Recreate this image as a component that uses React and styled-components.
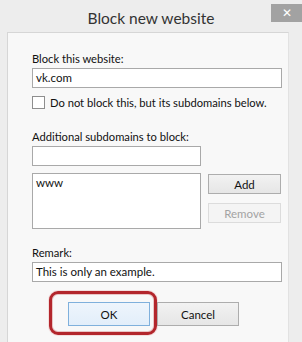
import React from 'react';
import styled, { createGlobalStyle } from 'styled-components';

const Global = createGlobalStyle`
  html, body { margin: 0; padding: 0; background: #ededed; }
  body { font-family: Lato, "Liberation Sans", sans-serif; }
`;

const Window = styled.div`
  width: 302px;
  height: 342px;
  background: #ededed;
  overflow: hidden;
  display: flex;
  flex-direction: column;
`;

const TitleBar = styled.div`
  height: 32px;
  display: grid;
  grid-template-columns: 31px 1fr 31px;
  align-items: start;
`;

const Title = styled.div`
  grid-column: 2;
  text-align: center;
  font-size: 15.5px;
  line-height: 22px;
  padding-top: 7px;
  color: #333;
`;

const CloseButton = styled.div`
  margin-top: 4px;
  height: 18px;
  background: #a2a2a2;
  color: #fff;
  font-size: 12px;
  line-height: 18px;
  text-align: center;
`;

const Panel = styled.div`
  margin-left: 7px;
  width: 282px;
  flex: 1;
  background: #f8f8f8;
  border-left: 1px solid #d6d6d6;
  border-top: 1px solid #d6d6d6;
  border-right: 1px solid #e2e2e2;
  padding: 18px 0 0 24px;
  box-sizing: border-box;
  display: flex;
  flex-direction: column;
`;

const Label = styled.div`
  font-size: 11.2px;
  line-height: 16px;
  color: #111;
  white-space: nowrap;
  margin-top: ${(p) => p.$top || 0}px;
`;

const TextBox = styled.div`
  width: ${(p) => p.$width}px;
  height: ${(p) => p.$height || 20}px;
  box-sizing: border-box;
  border: 1px solid #a9a9a9;
  background: #fff;
  font-size: 11.5px;
  line-height: 18px;
  padding: 0 3px;
  color: #111;
  margin-top: ${(p) => p.$top || 0}px;
`;

const CheckRow = styled.div`
  display: flex;
  align-items: center;
  gap: 5px;
  margin-top: 8px;
  font-size: 11.2px;
  color: #111;
  white-space: nowrap;
`;

const CheckBox = styled.div`
  width: 13px;
  height: 13px;
  box-sizing: border-box;
  border: 1px solid #8e8e8e;
  background: #fff;
`;

const ListRow = styled.div`
  display: flex;
  gap: 7px;
  margin-top: 7px;
`;

const ButtonColumn = styled.div`
  display: flex;
  flex-direction: column;
  gap: 9px;
  padding-top: 1px;
`;

const Button = styled.div`
  position: relative;
  width: ${(p) => p.$width || 73}px;
  height: ${(p) => p.$height || 20}px;
  box-sizing: border-box;
  border: 1px solid ${(p) => (p.$disabled ? '#dcdcdc' : p.$default ? '#7fb0dc' : '#adadad')};
  background: ${(p) =>
    p.$disabled
      ? '#f4f4f4'
      : p.$default
      ? 'linear-gradient(#eef5fc, #e2eefa)'
      : 'linear-gradient(#f2f2f2, #e6e6e6)'};
  color: ${(p) => (p.$disabled ? '#a3a3a3' : '#111')};
  font-size: 11.5px;
  display: flex;
  align-items: center;
  justify-content: center;
`;

const Footer = styled.div`
  display: flex;
  gap: 7px;
  margin-top: 20px;
  margin-left: 36px;
`;

const Highlight = styled.div`
  position: absolute;
  left: -20px;
  right: -8px;
  top: -12px;
  bottom: -10px;
  border: 3px solid #b3262c;
  border-radius: 9px;
  box-shadow: 0 0 0 1px #f3dede, inset 0 0 0 1px #e9c5c5;
  pointer-events: none;
`;

export default function App() {
  return (
    <>
      <Global />
      <Window>
        <TitleBar>
          <Title>Block new website</Title>
          <CloseButton>✕</CloseButton>
        </TitleBar>
        <Panel>
          <Label>Block this website:</Label>
          <TextBox $width={250} $top={1}>vk.com</TextBox>
          <CheckRow>
            <CheckBox />
            <span>Do not block this, but its subdomains below.</span>
          </CheckRow>
          <Label $top={20}>Additional subdomains to block:</Label>
          <TextBox $width={169} $top={1} />
          <ListRow>
            <TextBox $width={169} $height={56}>www</TextBox>
            <ButtonColumn>
              <Button>Add</Button>
              <Button $disabled>Remove</Button>
            </ButtonColumn>
          </ListRow>
          <Label $top={16}>Remark:</Label>
          <TextBox $width={250} $top={1}>This is only an example.</TextBox>
          <Footer>
            <Button $default $width={82} $height={24}>
              OK
              <Highlight />
            </Button>
            <Button $width={82} $height={24}>Cancel</Button>
          </Footer>
        </Panel>
      </Window>
    </>
  );
}
